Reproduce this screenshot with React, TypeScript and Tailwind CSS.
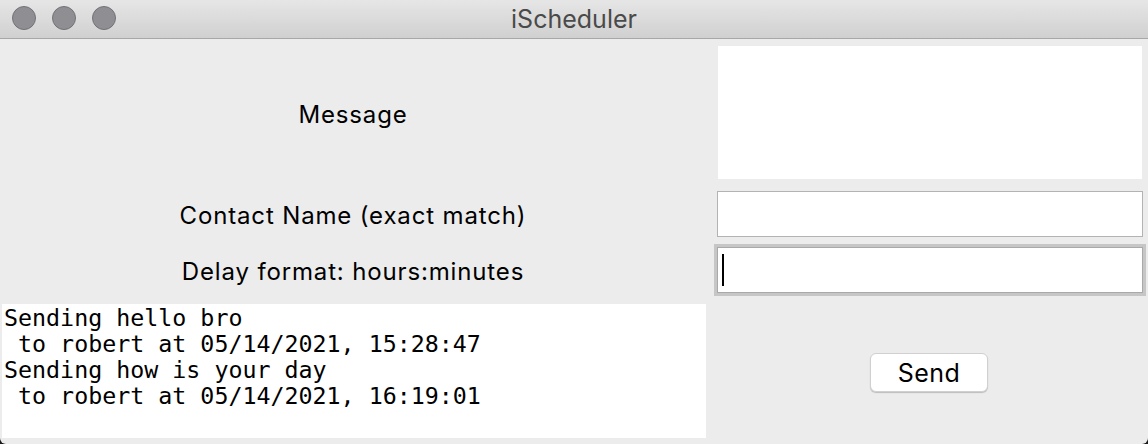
import React from "react";

const sans = { fontFamily: "Inter, 'Liberation Sans', sans-serif" };

export default function App() {
  return (
    <div className="w-[1148px] h-[444px] bg-[#1a1a1a] overflow-hidden">
      <div className="w-full h-full flex flex-col bg-[#ececec] rounded-b-[6px] overflow-hidden">
        {/* Title bar */}
        <div className="relative h-[39px] flex items-center justify-center bg-gradient-to-b from-[#e6e6e6] to-[#d0d0d0] border-b border-[#a8a8a8]">
          <div className="absolute left-[12px] top-[6px] flex gap-[16px]">
            <div className="w-[24px] h-[24px] rounded-full bg-[#8f8e92] border border-[#737276]" />
            <div className="w-[24px] h-[24px] rounded-full bg-[#8f8e92] border border-[#737276]" />
            <div className="w-[24px] h-[24px] rounded-full bg-[#8f8e92] border border-[#737276]" />
          </div>
          <span className="text-[25px] text-[#4a4a4a] leading-none" style={sans}>
            iScheduler
          </span>
        </div>

        {/* Body */}
        <div className="grid grid-cols-[706px_1fr] pt-[7px]" style={sans}>
          {/* Row 1 */}
          <div className="pt-[4px] flex items-center justify-center text-[24px] tracking-[0.85px] text-black">Message</div>
          <div className="pl-[12px] pr-[6px]">
            <div className="h-[133px] bg-white" />
          </div>

          {/* Row 2 */}
          <div className="mt-[12px] pt-[3px] flex items-center justify-center text-[24px] tracking-[0.85px] text-black">
            Contact Name (exact match)
          </div>
          <div className="mt-[12px] pl-[11px] pr-[5px]">
            <div className="h-[46px] bg-white border border-[#b3b3b3]" />
          </div>

          {/* Row 3 */}
          <div className="mt-[7px] pt-[3px] flex items-center justify-center text-[24px] tracking-[0.85px] text-black">
            Delay format: hours:minutes
          </div>
          <div className="mt-[7px] pl-[8px] pr-[2px]">
            <div className="h-[52px] bg-[#c6c6c6] p-[3px]">
              <div className="h-full bg-white border border-[#a9a9a9] flex items-center pl-[4px]">
                <div className="w-[2px] h-[32px] bg-black" />
              </div>
            </div>
          </div>

          {/* Row 4 */}
          <div className="mt-[8px] pl-[2px]">
            <div
              className="h-[134px] bg-white pl-[2px] pt-[1px] text-[23.3px] leading-[26px] text-black whitespace-pre"
              style={{ fontFamily: "'DejaVu Sans Mono', 'Liberation Mono', monospace" }}
            >
              {"Sending hello bro\n to robert at 05/14/2021, 15:28:47\nSending how is your day\n to robert at 05/14/2021, 16:19:01"}
            </div>
          </div>
          <div className="mt-[8px] pl-[4px] flex items-center justify-center">
            <button className="w-[118px] h-[39px] mt-[3px] pt-[2px] bg-white rounded-[6px] border border-[#d0d0d0] shadow-[0_1px_1px_rgba(0,0,0,0.2)] text-[25px] tracking-[0.5px] text-black leading-none">
              Send
            </button>
          </div>
        </div>
      </div>
    </div>
  );
}
